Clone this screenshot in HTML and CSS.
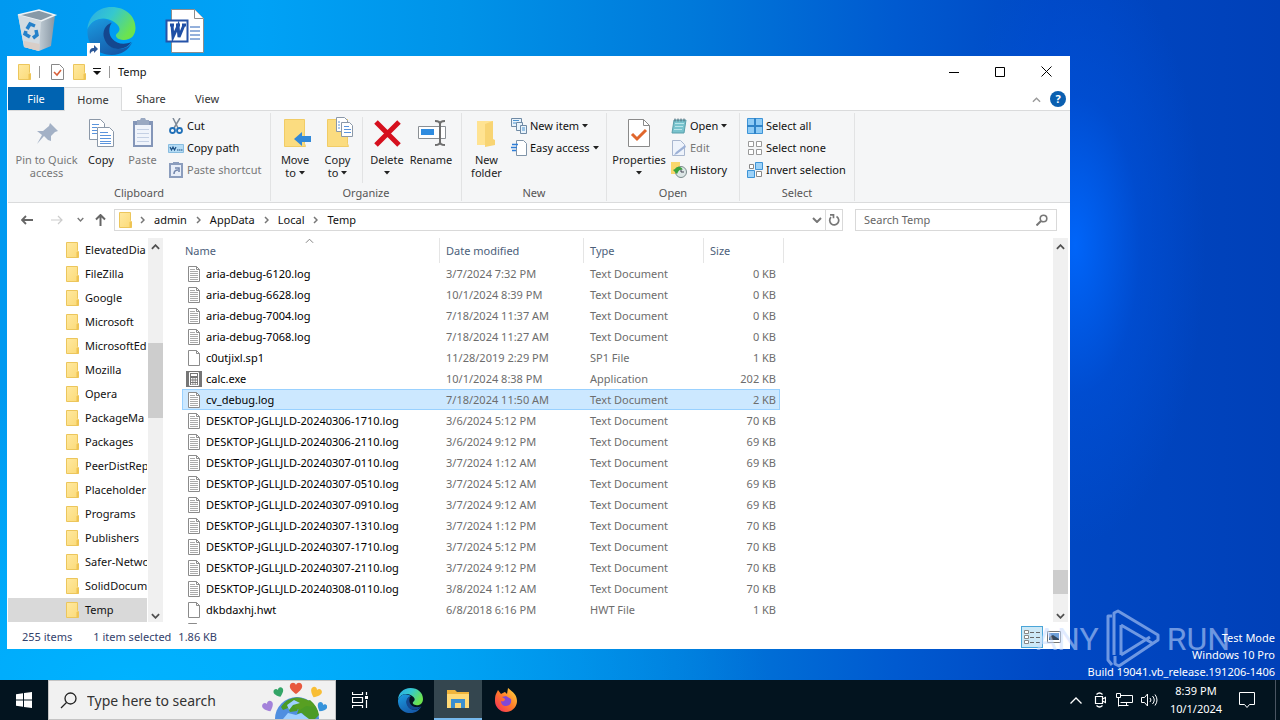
FILE: index.html
```html
<!DOCTYPE html>
<html lang="en">
<head>
<meta charset="utf-8">
<title>Temp</title>
<link rel="stylesheet" href="styles.css">
</head>
<body>
<svg class="defs" aria-hidden="true">
  <defs>
    <linearGradient id="gFold" x1="0" y1="0" x2="1" y2="1"><stop offset="0" stop-color="#ffe9a0"/><stop offset="1" stop-color="#fbda78"/></linearGradient>
    <linearGradient id="gEdgeA" x1="0" y1="0" x2="1" y2=".5"><stop offset="0" stop-color="#29a9e8"/><stop offset=".5" stop-color="#35c8cf"/><stop offset="1" stop-color="#6ce34e"/></linearGradient>
    <linearGradient id="gEdgeB" x1="0" y1="0" x2=".6" y2="1"><stop offset="0" stop-color="#1b9de2"/><stop offset="1" stop-color="#1559a8"/></linearGradient>
    <linearGradient id="gFox" x1="1" y1="0" x2="0" y2="1"><stop offset="0" stop-color="#ffe03f"/><stop offset=".5" stop-color="#ff7a2a"/><stop offset="1" stop-color="#f5245f"/></linearGradient>
    <linearGradient id="gBin" x1="0" y1="0" x2="1" y2="0"><stop offset="0" stop-color="#d5dce2"/><stop offset=".6" stop-color="#bcc8d1"/><stop offset="1" stop-color="#8796a3"/></linearGradient>
  </defs>
  <symbol id="folder" viewBox="0 0 14 16"><path d="M1.500.5h11v8l1 1.500v5.500h-12z" fill="url(#gFold)" stroke="#ecc65c"/><path d="M13.500 9.500l-2 .5v5.500h2z" fill="#efc452"/></symbol>
  <symbol id="txt" viewBox="0 0 14 16"><path d="M1.500.5h8l3 3v12h-11z" fill="#fff" stroke="#8b8b8b"/><path d="M9.500.5v3h3" fill="none" stroke="#8b8b8b"/><path d="M3 3.500h5M3 5.500h8M3 7.500h8M3 9.500h8M3 11.500h8M3 13.500h8" stroke="#aaa"/></symbol>
  <symbol id="blank" viewBox="0 0 14 16"><path d="M1.500.5h8l3 3v12h-11z" fill="#fff" stroke="#8b8b8b"/><path d="M9.500.5v3h3" fill="none" stroke="#8b8b8b"/></symbol>
  <symbol id="calc" viewBox="0 0 16 16"><path d="M0 0h16v16H0z" fill="#767676"/><path d="M3.500 1.500h9v13h-9z" fill="#767676" stroke="#fff"/><path d="M5 3h6v2H5zM5 7h1.500v1.500H5zM7.300 7h1.500v1.500H7.300zM9.600 7h1.500v1.500H9.600zM5 9.500h1.500V11H5zM7.300 9.500h1.500V11H7.300zM9.600 9.500h1.500V11H9.600zM5 12h1.500v1.500H5zM7.300 12h1.500v1.500H7.300zM9.600 12h1.500v1.500H9.600z" fill="#fff"/></symbol>
  <symbol id="edge" viewBox="0 0 48 48"><path d="M24 0C10 0 1 10 0 22c5-11 17-13 25-8 8 5 9 9 4 13-2 2 1 6 7 6 8 0 12-5 12-12C48 9 38 0 24 0z" fill="url(#gEdgeA)"/><path d="M0 23C4 11 18 9 25 16c-7 2-10 9-7 16 3 8 11 12 19 9 4-1 6-4 8-6C41 43 34 48 24 48 11 48-1 39 0 23z" fill="url(#gEdgeB)"/><path d="M24 16c-6 1-10 9-7 16 3 8 11 12 19 9 4-1 6-4 8-6-7 3-15 2-19-3-4-4-4-12-1-16z" fill="#14478f"/></symbol>
  <symbol id="caret" viewBox="0 0 6 4"><path d="M0 0h6L3 3.500z" fill="#222"/></symbol>
  <symbol id="up" viewBox="0 0 10 6"><path d="M1 5l4-4 4 4" fill="none" stroke="currentColor" stroke-width="2"/></symbol>
  <symbol id="down" viewBox="0 0 10 6"><path d="M1 1l4 4 4-4" fill="none" stroke="currentColor" stroke-width="2"/></symbol>
  <symbol id="chev" viewBox="0 0 5 8"><path d="M1 1l3 3-3 3" fill="none" stroke="#777" stroke-width="1.500"/></symbol>
</svg>

<main class="desktop">
  <div class="shortcuts">
    <svg class="sc" viewBox="0 0 48 52" role="img" aria-label="Recycle Bin"><path d="M6 11l21-5 16 5-4 31-12 5-15-4z" fill="url(#gBin)"/><path d="M6 11l21-5 16 5-14 6z" fill="#8799a7" stroke="#eef3f6" stroke-width="1.500"/><path d="M6 11l23 6-2 30-15-4z" fill="#d3dbe1"/><path d="M12 37l16 3-1 7-15-4z" fill="#d8cec8"/><g fill="none" stroke="#2581ca" stroke-width="3.500"><path d="M15 25l3-5 5 2M24 26l1 5-4 3M18 33l-5-3 1-3"/></g></svg>
    <svg class="sc" viewBox="0 0 52 52" role="img" aria-label="Microsoft Edge"><use href="#edge" x="2" y="3" width="49" height="48"/><path d="M2 39h13v13H2z" fill="#fff"/><path d="M5 50c-1-5 1-6 4-6v-3l4 4-4 4v-2c-2 0-3 1-4 3z" fill="#2b5797"/></svg>
    <svg class="sc" viewBox="0 0 48 52" role="img" aria-label="Word document"><path d="M12.500 5.500h23l9 9v34h-32z" fill="#fff" stroke="#8d8d8d"/><path d="M35.500 5.500v9h9" fill="#fff" stroke="#8d8d8d"/><path d="M31 23h10M31 27h10M31 31h10M31 35h10" stroke="#2b62b8"/><path d="M7.500 16.500h21v21h-21z" fill="#fff" stroke="#2553a8" stroke-width="2"/><path d="M11 21h4M17 21h4M23 21h4M13 21l1 12 5-11 1 11 5-12" fill="none" stroke="#1f4fa5" stroke-width="3"/></svg>
  </div>

  <section class="window" aria-label="Temp">
    <header class="titlebar">
      <svg width="14" height="16"><use href="#folder"/></svg>
      <span class="bar"></span>
      <svg class="qprop" width="13" height="16" viewBox="0 0 13 16"><path d="M.5.5h8l4 4v11H.5z" fill="#fff" stroke="#888"/><path d="M3 8l3 3 4-5" fill="none" stroke="#d8603a" stroke-width="1.600"/></svg>
      <svg class="qfold" width="14" height="16"><use href="#folder"/></svg>
      <svg class="qcaret" width="8" height="7" viewBox="0 0 8 7"><path d="M0 .5h8" stroke="#111"/><path d="M0 3h8L4 7z" fill="#111"/></svg>
      <span class="bar"></span>
      <h1>Temp</h1>
      <div class="winbtns">
        <button aria-label="Minimize"><svg width="10" height="10" viewBox="0 0 10 10"><path d="M0 5.500h10" stroke="#000"/></svg></button>
        <button aria-label="Maximize"><svg width="10" height="10" viewBox="0 0 10 10"><path d="M.5.5h9v9h-9z" fill="none" stroke="#000"/></svg></button>
        <button aria-label="Close"><svg width="11" height="11" viewBox="0 0 11 11"><path d="M.5.5l10 10M10.500.5l-10 10" stroke="#000"/></svg></button>
      </div>
    </header>

    <nav class="tabs">
      <button class="tab file">File</button>
      <button class="tab on">Home</button>
      <button class="tab share">Share</button>
      <button class="tab view">View</button>
      <button class="fold-ribbon" aria-label="Collapse ribbon"><svg width="9" height="6" viewBox="0 0 10 6"><path d="M1 5l4-4 4 4" fill="none" stroke="#999" stroke-width="1.500"/></svg></button>
      <button class="help" aria-label="Help">?</button>
    </nav>

    <div class="ribbon">
      <section class="group clip">
        <div class="tools">
          <button class="big pin off"><svg width="32" height="32" viewBox="0 0 32 32"><path d="M19 6l8 8-3 1-4 4v5l-3-1-4-4-7 8 5-9-5-4h6l6-5z" fill="#a3b1c6"/></svg>Pin to Quick<br>access</button>
          <button class="big copy"><svg width="32" height="32" viewBox="0 0 32 32"><g fill="#fff" stroke="#8b98a8"><path d="M4.500 2.500h11l4 4v16h-15z"/><path d="M12.500 10.500h12l4 4v15h-16z"/></g><path d="M7 7.500h7M7 10.500h5M7 13.500h5M7 16.500h5M15 15.500h8M15 18.500h11M15 21.500h11M15 24.500h11M15 26.500h11" stroke="#5b94dc"/></svg>Copy</button>
          <button class="big paste off"><svg width="32" height="32" viewBox="0 0 32 32"><path d="M6 4h20v26H6z" fill="#8496b8"/><path d="M8 8h16v20H8z" fill="#f0f4fb"/><path d="M10 3h3l1-2h4l1 2h3v5H10z" fill="#9aa9c2"/><path d="M10 12.500h12M10 16.500h12M10 20.500h12M10 24.500h12" stroke="#c4d0e4"/></svg>Paste</button>
          <div class="list">
            <button><svg viewBox="0 0 16 16"><path d="M5 0l5 10M12 0L6 10" stroke="#7e8b98" stroke-width="1.500"/><g fill="none" stroke="#2070b8" stroke-width="1.800"><circle cx="4.500" cy="12.500" r="2.500"/><circle cx="11.500" cy="12.500" r="2.500"/></g></svg>Cut</button>
            <button><svg viewBox="0 0 16 16"><path d="M.5 4.500h15v8H.5z" fill="#b5dcf5" stroke="#88bde0"/><path d="M2 7l1.500 3L5 7l1.500 3L8 7M9 10h1.500M11 10h1.500M13 10h1.500" fill="none" stroke="#1c4f83" stroke-width="1.200"/></svg>Copy path</button>
            <button class="off"><svg viewBox="0 0 16 16"><path d="M2 2h12v13H2z" fill="#e8eef8" stroke="#8b9dbd" stroke-width="2"/><path d="M5 0h6v3H5z" fill="#8b9dbd"/><path d="M6 12c0-3 1-4 4-4M7 6h4v4" fill="none" stroke="#7488ad" stroke-width="1.600"/></svg>Paste shortcut</button>
          </div>
        </div>
        <h2>Clipboard</h2>
      </section>

      <section class="group org">
        <div class="tools">
          <button class="big move"><svg width="32" height="32" viewBox="0 0 32 32"><path d="M5.500 2.500h20v24l1 3h-21z" fill="#fbdc80" stroke="#f1cc66"/><path d="M15 22l8-7v4h9v6h-9v4z" fill="#3289d8"/></svg>Move<br>to <svg class="caret"><use href="#caret"/></svg></button>
          <button class="big copyto"><svg width="32" height="32" viewBox="0 0 32 32"><path d="M5.500 2.500h20v24l1 3h-21z" fill="#fbdc80" stroke="#f1cc66"/><g fill="#fff" stroke="#8b98a8"><path d="M14.500.5h8l3 3v11h-11z"/><path d="M19.500 5.500h8l3 3v11h-11z"/></g><path d="M16 5h2M16 8h2M16 11h2M22 9.500h5M22 12.500h7M22 15.500h7" stroke="#5b94dc"/></svg>Copy<br>to <svg class="caret"><use href="#caret"/></svg></button>
          <span class="div"></span>
          <button class="big del"><svg width="32" height="32" viewBox="0 0 32 32"><path d="M5 5l23 23M28 5L5 28" stroke="#d6101e" stroke-width="5"/></svg>Delete<br><svg class="caret"><use href="#caret"/></svg></button>
          <button class="big ren"><svg width="32" height="32" viewBox="0 0 32 32"><path d="M3.500 9.500h27v12h-27z" fill="#fff" stroke="#8a8f94"/><path d="M6 12h13v6H6z" fill="#2f8ce0"/><path d="M20 4q5 0 5 3 0-3 5-3M25 6v20M20 28q5 0 5-3 0 3 5 3" fill="none" stroke="#6e6e6e" stroke-width="2"/></svg>Rename</button>
        </div>
        <h2>Organize</h2>
      </section>

      <section class="group new">
        <div class="tools">
          <button class="big nf"><svg width="32" height="32" viewBox="0 0 32 32"><path d="M6 4h16v24H6z" fill="#ffe392"/><path d="M14 7l8-3v18l2 1v5l-10 2z" fill="#f8d473"/></svg>New<br>folder</button>
          <div class="list">
            <button><svg viewBox="0 0 16 16"><g fill="#e9f3fb" stroke="#6f8aa5"><path d="M.5.500h10v8H.5z"/><path d="M5.500 4.500h6v8h-6z"/><path d="M9.500 7.500h6v8h-6z"/></g><path d="M2 2.500h6M2 5h3M11 10h3M11 12h3" stroke="#4a93cf"/></svg>New item <svg class="caret"><use href="#caret"/></svg></button>
            <button><svg viewBox="0 0 16 16"><path d="M5.500.5h7l3 3v12h-10z" fill="#fff" stroke="#8094a8"/><path d="M1 4.500h6M0 7.500h6M1 10.500h4" stroke="#2f7ed8" stroke-width="1.400"/></svg>Easy access <svg class="caret"><use href="#caret"/></svg></button>
          </div>
        </div>
        <h2>New</h2>
      </section>

      <section class="group open">
        <div class="tools">
          <button class="big props"><svg width="32" height="32" viewBox="0 0 32 32"><path d="M5.500 2.500h15l6 6v21h-21z" fill="#fff" stroke="#8a8a8a"/><path d="M20.500 2.500v6h6" fill="none" stroke="#8a8a8a"/><path d="M9 17l5 5 9-9" fill="none" stroke="#e0662c" stroke-width="3"/></svg>Properties<br><svg class="caret"><use href="#caret"/></svg></button>
          <div class="list">
            <button><svg viewBox="0 0 16 16"><path d="M3 2h12l-2 13H1z" fill="#79c3cd" stroke="#5b9fab"/><path d="M4 5.500h9M4 8.500h8M3 11.500h8" stroke="#b9e5ea"/><path d="M4 .5v3M7 .5v3M10 .5v3M13 .5v3" stroke="#506b78"/></svg>Open <svg class="caret"><use href="#caret"/></svg></button>
            <button class="off"><svg viewBox="0 0 16 16"><path d="M1.500.5h8l4 4v11h-12z" fill="#eef3fb" stroke="#a9b7cf"/><path d="M5 12L14 5l1 2-9 7-3 1z" fill="#9db1d6"/></svg>Edit</button>
            <button><svg viewBox="0 0 16 16"><path d="M0 0h9v12H0z" fill="#f8d76d"/><circle cx="10" cy="10" r="5.500" fill="#dce6e6" stroke="#7b8c8c"/><path d="M10 7v3h3" fill="none" stroke="#445"/><path d="M2 8l4 4 1-2c1-2 3-3 5-2-2-4-6-4-8-1z" fill="#39a23d"/></svg>History</button>
          </div>
        </div>
        <h2>Open</h2>
      </section>

      <section class="group sel">
        <div class="tools">
          <div class="list">
            <button><svg viewBox="0 0 16 16"><path d="M.5.5h15v15H.5z" fill="#8ecbf6" stroke="#3d93d6"/><path d="M8 0v16M0 8h16" stroke="#2f83c8" stroke-width="2"/></svg>Select all</button>
            <button><svg viewBox="0 0 16 16"><path d="M1.500 1.500h5v5h-5zM9.500 1.500h5v5h-5zM1.500 9.500h5v5h-5zM9.500 9.500h5v5h-5z" fill="#fff" stroke="#999"/></svg>Select none</button>
            <button><svg viewBox="0 0 16 16"><path d="M2.500 2.500h4v4h-4zM9.500 9.500h5v5h-5z" fill="#fff" stroke="#888"/><path d="M8.500.5h7v7h-7zM.5 8.500h7v7h-7z" fill="#9dd2f8" stroke="#3d93d6"/></svg>Invert selection</button>
          </div>
        </div>
        <h2>Select</h2>
      </section>
    </div>

    <div class="nav">
      <button aria-label="Back"><svg width="12" height="10" viewBox="0 0 12 10"><path d="M12 5H1M5 1L1 5l4 4" fill="none" stroke="#666" stroke-width="1.800"/></svg></button>
      <button class="fwd" aria-label="Forward"><svg width="12" height="10" viewBox="0 0 12 10"><path d="M0 5h11M7 1l4 4-4 4" fill="none" stroke="#ccc" stroke-width="1.200"/></svg></button>
      <button class="rec" aria-label="Recent locations"><svg width="7" height="5"><use href="#down"/></svg></button>
      <button class="upb" aria-label="Up"><svg width="11" height="12" viewBox="0 0 11 12"><path d="M5.500 12V1M1 5.500L5.500 1 10 5.500" fill="none" stroke="#666" stroke-width="2"/></svg></button>
      <div class="address">
        <svg width="14" height="16"><use href="#folder"/></svg>
        <svg class="sep first"><use href="#chev"/></svg><a href="#">admin</a>
        <svg class="sep"><use href="#chev"/></svg><a href="#">AppData</a>
        <svg class="sep"><use href="#chev"/></svg><a href="#">Local</a>
        <svg class="sep"><use href="#chev"/></svg><a href="#">Temp</a>
        <button class="drop" aria-label="Previous locations"><svg width="10" height="6"><use href="#down"/></svg></button>
        <button class="refresh" aria-label="Refresh"><svg width="12" height="12" viewBox="0 0 12 12"><path d="M8.500 2.500A4.500 4.500 0 1 1 3 3.200M2 .8h3.500v3.500" fill="none" stroke="#777" stroke-width="1.700"/></svg></button>
      </div>
      <label class="search"><input type="text" placeholder="Search Temp" aria-label="Search Temp"><svg width="12" height="12" viewBox="0 0 12 12"><circle cx="7.500" cy="4.500" r="3.300" fill="none" stroke="#777" stroke-width="1.600"/><path d="M5 7L.5 11.500" stroke="#777" stroke-width="2"/></svg></label>
    </div>

    <div class="body">
      <ul class="tree">
        <li><svg><use href="#folder"/></svg>ElevatedDia</li>
        <li><svg><use href="#folder"/></svg>FileZilla</li>
        <li><svg><use href="#folder"/></svg>Google</li>
        <li><svg><use href="#folder"/></svg>Microsoft</li>
        <li><svg><use href="#folder"/></svg>MicrosoftEd</li>
        <li><svg><use href="#folder"/></svg>Mozilla</li>
        <li><svg><use href="#folder"/></svg>Opera</li>
        <li><svg><use href="#folder"/></svg>PackageMa</li>
        <li><svg><use href="#folder"/></svg>Packages</li>
        <li><svg><use href="#folder"/></svg>PeerDistRep</li>
        <li><svg><use href="#folder"/></svg>Placeholder</li>
        <li><svg><use href="#folder"/></svg>Programs</li>
        <li><svg><use href="#folder"/></svg>Publishers</li>
        <li><svg><use href="#folder"/></svg>Safer-Netwo</li>
        <li><svg><use href="#folder"/></svg>SolidDocum</li>
        <li class="cur"><svg><use href="#folder"/></svg>Temp</li>
      </ul>
      <div class="scroll left"><svg><use href="#up"/></svg><span class="thumb"></span><svg><use href="#down"/></svg></div>
      <div class="files">
        <table>
          <colgroup><col class="c1"><col class="c2"><col class="c3"><col class="c4"><col class="c5"></colgroup>
          <thead><tr><th>Name<svg class="sort" viewBox="0 0 10 6"><path d="M1 5l4-4 4 4" fill="none" stroke="#777"/></svg></th><th>Date modified</th><th>Type</th><th colspan="2">Size</th></tr></thead>
          <tbody>
            <tr><td><svg><use href="#txt"/></svg>aria-debug-6120.log</td><td>3/7/2024 7:32 PM</td><td>Text Document</td><td>0 KB</td></tr>
            <tr><td><svg><use href="#txt"/></svg>aria-debug-6628.log</td><td>10/1/2024 8:39 PM</td><td>Text Document</td><td>0 KB</td></tr>
            <tr><td><svg><use href="#txt"/></svg>aria-debug-7004.log</td><td>7/18/2024 11:37 AM</td><td>Text Document</td><td>0 KB</td></tr>
            <tr><td><svg><use href="#txt"/></svg>aria-debug-7068.log</td><td>7/18/2024 11:27 AM</td><td>Text Document</td><td>0 KB</td></tr>
            <tr><td><svg><use href="#blank"/></svg>c0utjixl.sp1</td><td>11/28/2019 2:29 PM</td><td>SP1 File</td><td>1 KB</td></tr>
            <tr><td><svg><use href="#calc"/></svg>calc.exe</td><td>10/1/2024 8:38 PM</td><td>Application</td><td>202 KB</td></tr>
            <tr class="picked"><td><svg><use href="#txt"/></svg>cv_debug.log</td><td>7/18/2024 11:50 AM</td><td>Text Document</td><td>2 KB</td></tr>
            <tr><td><svg><use href="#txt"/></svg>DESKTOP-JGLLJLD-20240306-1710.log</td><td>3/6/2024 5:12 PM</td><td>Text Document</td><td>70 KB</td></tr>
            <tr><td><svg><use href="#txt"/></svg>DESKTOP-JGLLJLD-20240306-2110.log</td><td>3/6/2024 9:12 PM</td><td>Text Document</td><td>69 KB</td></tr>
            <tr><td><svg><use href="#txt"/></svg>DESKTOP-JGLLJLD-20240307-0110.log</td><td>3/7/2024 1:12 AM</td><td>Text Document</td><td>69 KB</td></tr>
            <tr><td><svg><use href="#txt"/></svg>DESKTOP-JGLLJLD-20240307-0510.log</td><td>3/7/2024 5:12 AM</td><td>Text Document</td><td>69 KB</td></tr>
            <tr><td><svg><use href="#txt"/></svg>DESKTOP-JGLLJLD-20240307-0910.log</td><td>3/7/2024 9:12 AM</td><td>Text Document</td><td>69 KB</td></tr>
            <tr><td><svg><use href="#txt"/></svg>DESKTOP-JGLLJLD-20240307-1310.log</td><td>3/7/2024 1:12 PM</td><td>Text Document</td><td>70 KB</td></tr>
            <tr><td><svg><use href="#txt"/></svg>DESKTOP-JGLLJLD-20240307-1710.log</td><td>3/7/2024 5:12 PM</td><td>Text Document</td><td>70 KB</td></tr>
            <tr><td><svg><use href="#txt"/></svg>DESKTOP-JGLLJLD-20240307-2110.log</td><td>3/7/2024 9:12 PM</td><td>Text Document</td><td>70 KB</td></tr>
            <tr><td><svg><use href="#txt"/></svg>DESKTOP-JGLLJLD-20240308-0110.log</td><td>3/8/2024 1:12 AM</td><td>Text Document</td><td>70 KB</td></tr>
            <tr><td><svg><use href="#blank"/></svg>dkbdaxhj.hwt</td><td>6/8/2018 6:16 PM</td><td>HWT File</td><td>1 KB</td></tr>
            <tr><td><svg><use href="#txt"/></svg></td><td></td><td></td><td></td></tr>
          </tbody>
        </table>
      </div>
      <div class="scroll right"><svg><use href="#up"/></svg><span class="thumb"></span><svg><use href="#down"/></svg></div>
    </div>

    <footer class="status">
      <span class="count">255 items</span><span>1 item selected</span><span class="size">1.86 KB</span>
      <div class="modes">
        <button class="on" aria-label="Details view"><svg width="16" height="14" viewBox="0 0 16 14"><path d="M.5.500h4v3h-4zM.5 5.500h4v3h-4zM.5 10.500h4v3h-4z" fill="#fff" stroke="#888"/><path d="M6 2.500h4M12 2.500h4M6 7.500h4M12 7.500h4M6 12.500h4M12 12.500h4" stroke="#666"/></svg></button>
        <button aria-label="Large icons view"><svg width="14" height="12" viewBox="0 0 14 12"><path d="M.5.500h13v11H.5z" fill="#fff" stroke="#777"/><path d="M2 2h10v6H2z" fill="#6e9fd8"/><path d="M2 6l4-2 6 4v1H2z" fill="#33475d"/></svg></button>
      </div>
    </footer>
  </section>

  <div class="watermark" aria-label="ANY RUN">
    <span>ANY</span>
    <svg width="56" height="60" viewBox="0 0 56 60"><path d="M9 46V4l4-2 40 24v5L14 57l-4-2v-8M7 7H3v44l4 5M16 16l31 18M16 46l29-18M16 16v30" fill="none" stroke="#c9dcff" stroke-width="3" stroke-linejoin="round"/></svg>
    <span>RUN</span>
  </div>
  <p class="build">Test Mode<br>Windows 10 Pro<br>Build 19041.vb_release.191206-1406</p>
</main>

<footer class="taskbar">
  <button class="start" aria-label="Start"><svg width="16" height="16" viewBox="0 0 16 16"><path d="M0 2.300L7 1.300v6.200H0zM8 1.100L16 0v7.500H8zM0 8.500h7v6.200l-7-1zM8 8.500h8V16l-8-1.100z" fill="#fff"/></svg></button>
  <label class="tsearch">
    <svg width="17" height="17" viewBox="0 0 17 17"><circle cx="10.500" cy="6.500" r="5.500" fill="none" stroke="#222" stroke-width="1.300"/><path d="M6.500 10.500L1 16" stroke="#222" stroke-width="1.300"/></svg>
    <input type="text" placeholder="Type here to search" aria-label="Type here to search">
    <svg class="globe" width="66" height="37" viewBox="0 0 66 37"><defs><path id="heart" d="M0 9C-4 6-7 3-6 0-5-3-1-3 0 0 1-3 5-3 6 0 7 3 4 6 0 9z"/></defs><circle cx="36" cy="37" r="22" fill="#4f8fe0"/><path d="M20 25c5-8 12-10 20-9l4 5-6 3-2 5-7 1-2-4-5 2zM43 20l6-2c5 4 8 9 9 15l-4 4h-8l-5-6-5 1 2-6z" fill="#4b9b26"/><path d="M34 16c9-1 16 3 20 9l-9-1-6 4-6-3 4-4z" fill="#579f22"/><path d="M22 37l5-6 8 2 5-2 8 6z" fill="#9fd0ff"/><path d="M26 23l7-5 6 3-7 2-4 5z" fill="#9fd0ff"/><use href="#heart" x="35" y="3" fill="#e8593f"/><use href="#heart" transform="translate(17 8) rotate(-20) scale(.8)" fill="#34a567"/><use href="#heart" transform="translate(56 8) rotate(25) scale(.9)" fill="#f8be35"/><use href="#heart" transform="translate(6 22) rotate(-25) scale(.9)" fill="#a482da"/><use href="#heart" transform="translate(62 23) rotate(30) scale(.8)" fill="#3694db"/></svg>
  </label>
  <button class="app" aria-label="Task View"><svg width="17" height="16" viewBox="0 0 17 16"><path d="M.5 0v2.500h10V0M.5 5.500h10v5H.5zM.5 16v-2.500h10V16M14.500 0v3M14.500 8v8" fill="none" stroke="#fff" stroke-width="1.200"/><path d="M13 4h3v3h-3z" fill="#fff"/></svg></button>
  <button class="app" aria-label="Microsoft Edge"><svg width="25" height="25"><use href="#edge"/></svg></button>
  <button class="app on" aria-label="File Explorer"><svg width="24" height="20" viewBox="0 0 24 20"><path d="M1 1h8l2 2h12v16H1z" fill="#f0b43c"/><path d="M1 5h22v14H1z" fill="#ffd977"/><path d="M5 10h14v9h-4v-5H9v5H5z" fill="#3b8fd0"/></svg></button>
  <button class="app" aria-label="Firefox"><svg width="24" height="24" viewBox="0 0 24 24"><path d="M2 6l2-4 3 4c2-1 3-2 4-2l2 2 1-6c5 4 9 7 9 13 0 6-5 11-11 11S1 19 1 13c0-3 0-5 1-7z" fill="url(#gFox)"/><path d="M8 9l4-1 5 3c1 5-2 7-5 7s-5-2-5-5c2 1 4 0 4-2z" fill="#8148d6"/></svg></button>
  <div class="tray">
    <button aria-label="Show hidden icons"><svg width="12" height="7" viewBox="0 0 12 7"><path d="M.5 6.500l5.500-5.500 5.500 5.500" fill="none" stroke="#fff" stroke-width="1.300"/></svg></button>
    <button aria-label="Meet Now"><svg width="12" height="16" viewBox="0 0 12 16"><path d="M1.500 4.500h7v7h-7zM8.500 7l3-1.500v5L8.500 9M2.500 2.500q3-3 6 0M2.500 13.500q3 3 6 0" fill="none" stroke="#fff" stroke-width="1.200"/></svg></button>
    <button aria-label="Network"><svg width="17" height="14" viewBox="0 0 17 14"><path d="M4.500 2.500h12v7h-12M.5.500h4v4h-4zM2.500 4.500v9M2.500 12.500h10M10.500 9.500v3" fill="none" stroke="#fff"/></svg></button>
    <button aria-label="Volume"><svg width="17" height="14" viewBox="0 0 17 14"><path d="M.5 4.500h3l3-3.500v12l-3-3.500h-3zM9 5q2 2 0 4M11.500 3q3.500 4 0 8M14 1.500q4 5.500 0 11" fill="none" stroke="#fff"/></svg></button>
    <div class="clock">8:39 PM<br>10/1/2024</div>
    <button class="note" aria-label="Notifications"><svg width="16" height="16" viewBox="0 0 16 16"><path d="M.5.5h15v12h-5L8 15.500 5.500 12.500h-5z" fill="none" stroke="#fff"/></svg></button>
  </div>
</footer>
</body>
</html>
```
FILE: styles.css
```css
* { box-sizing: border-box; }
body {
  margin: 0;
  height: 100vh;
  display: flex;
  flex-direction: column;
  overflow: hidden;
  font: 11px/14px "Noto Sans", sans-serif;
  color: #111;
}
button {
  border: 0;
  padding: 0;
  background: none;
  font: inherit;
  color: inherit;
}
input {
  border: 0;
  outline: 0;
  min-width: 0;
  background: none;
  font: inherit;
}
h1, h2 { margin: 0; font: inherit; }
svg { flex: none; }
.defs { position: absolute; width: 0; height: 0; }

/* Desktop */
.desktop {
  flex: 1;
  position: relative;
  background:
    radial-gradient(ellipse 130px 300px at 84% 36%, rgba(0, 104, 255, .9) 0%, rgba(0, 84, 225, .45) 50%, rgba(0, 70, 200, 0) 100%),
    radial-gradient(ellipse 640px 300px at 10% 100%, #00b2ff 0%, rgba(0, 178, 255, 0) 100%),
    linear-gradient(90deg, #0099f0 0%, #00a2f6 20%, #0093e8 36%, #0079da 54%, #005ad0 70%, #0048c4 82%, #0040b8 100%);
}
.shortcuts { display: flex; gap: 25px; padding: 4px 0 0 12px; }
.sc { width: 48px; height: 52px; }
.sc:nth-child(2) { width: 52px; }
.sc:nth-child(3) { margin-left: -3px; }

/* Explorer window */
.window {
  position: absolute;
  top: 56px;
  left: 7px;
  right: 210px;
  bottom: 31px;
  display: flex;
  flex-direction: column;
  padding-left: 1px;
  background: #fff;
}
.titlebar { display: flex; align-items: center; height: 31px; padding-left: 9px; }
.bar { width: 1px; height: 12px; background: #999; margin-left: 8px; }
.qprop { margin-left: 11px; }
.qfold { margin-left: 8px; }
.qcaret { margin-left: 7px; }
h1 { margin-left: 8px; }
.winbtns { margin-left: auto; margin-right: 1px; display: flex; }
.winbtns button { width: 46px; height: 30px; display: grid; place-items: center; }

.tabs { display: flex; height: 24px; border-bottom: 1px solid #dadbdc; }
.tab { height: 24px; width: 56px; color: #333; }
.tab.file { background: #0063b1; color: #fff; height: 23px; }
.tab.on { width: 58px; background: #f5f6f7; border: 1px solid #dadbdc; border-bottom: 0; }
.tab.share { width: 58px; }
.tab.view { width: 54px; }
.fold-ribbon { margin-left: auto; margin-right: 9px; }
.help {
  align-self: center;
  width: 16px;
  height: 16px;
  margin-right: 4px;
  border-radius: 50%;
  background: #0a5fb0;
  color: #fff;
  font-weight: bold;
}

/* Ribbon */
.ribbon { display: flex; height: 92px; background: #f5f6f7; border-bottom: 1px solid #dadbdc; }
.group {
  display: flex;
  flex-direction: column;
  justify-content: space-between;
  margin: 2px 0 1px;
  border-right: 1px solid #e2e3e4;
}
.clip { width: 263px; }
.org { width: 191px; }
.new { width: 145px; }
.open { width: 133px; }
.sel { width: 115px; }
.group h2 { text-align: center; color: #555; padding-bottom: 1px; }
.tools { display: flex; align-items: flex-start; }
.big {
  padding-top: 4px;
  line-height: 13px;
  white-space: nowrap;
  color: #222;
}
.big > svg:first-child { display: block; margin: 0 auto 4px; }
.big.off, .off { color: #777; }
.pin { width: 77px; }
.copy { width: 32px; }
.paste { width: 51px; }
.caret { width: 6px; height: 4px; vertical-align: 2px; }
.move { width: 48px; }
.copyto { width: 37px; }
.div { width: 1px; margin: 4px 6px 0; height: 66px; background: #e2e3e4; }
.del { width: 36px; }
.ren { width: 52px; }
.nf { width: 49px; }
.props { width: 64px; }
.list { display: flex; flex-direction: column; padding-top: 2px; }
.list button {
  display: flex;
  align-items: center;
  gap: 3px;
  height: 22px;
  white-space: nowrap;
}
.list svg:first-child { width: 16px; height: 16px; }
.sel .list { padding-left: 7px; }

/* Address row */
.nav { display: flex; align-items: center; height: 35px; padding: 0 13px 2px; }
.nav button { display: grid; place-items: center; }
.fwd { margin-left: 18px; }
.rec { margin-left: 14px; color: #777; }
.upb { margin-left: 11px; }
.address {
  flex: 1;
  display: flex;
  align-items: center;
  height: 22px;
  margin: 0 12px 0 8px;
  padding-left: 3px;
  border: 1px solid #d9d9d9;
}
.address a { color: #111; text-decoration: none; }
.sep { width: 5px; height: 8px; margin: 0 9px; }
.sep.first { margin-left: 8px; }
.drop { margin-left: auto; width: 16px; color: #777; }
.refresh { width: 17px; height: 20px; border-left: 1px solid #d9d9d9; }
.search {
  display: flex;
  align-items: center;
  width: 202px;
  height: 22px;
  padding: 0 8px;
  border: 1px solid #d9d9d9;
}
.search input { flex: 1; padding: 0; }
.search input::placeholder { color: #666; opacity: 1; }

/* Body */
.body { flex: 1; min-height: 0; display: flex; overflow: hidden; }
.tree { width: 139px; margin: 0; padding: 0; list-style: none; overflow: hidden; }
.tree li {
  display: flex;
  align-items: center;
  gap: 6px;
  height: 24px;
  padding-left: 57px;
  white-space: nowrap;
}
.tree svg { width: 14px; height: 16px; }
.tree .cur { background: #d9d9d9; }
.scroll {
  display: flex;
  flex-direction: column;
  align-items: center;
  width: 15px;
  margin-bottom: 2px;
  padding: 6px 0 3px;
  background: #f0f0f0;
  color: #505050;
}
.scroll svg { width: 9px; height: 6px; }
.thumb { width: 15px; background: #cdcdcd; }
.left { margin-left: 1px; }
.left .thumb { height: 75px; margin: 93px 0 auto; }
.right .thumb { height: 24px; margin: auto 0 19px; }
.right { margin-right: 2px; }
.files { flex: 1; margin-left: 19px; overflow: hidden; }
table { width: 602px; table-layout: fixed; border-collapse: separate; border-spacing: 0; }
.c1 { width: 258px; }
.c2 { width: 144px; }
.c3 { width: 120px; }
.c4 { width: 76px; }
.c5 { width: 4px; }
th {
  position: relative;
  height: 25px;
  padding: 0 0 0 6px;
  border-right: 1px solid #e5e5e5;
  text-align: left;
  font-weight: normal;
  color: #4c607a;
}
th:first-child { padding-left: 3px; }
.sort { position: absolute; left: 123px; top: 0; width: 9px; height: 6px; }
td { height: 21px; padding: 0 0 0 6px; white-space: nowrap; color: #6d6d6d; }
td:first-child { display: flex; align-items: center; gap: 4px; padding-left: 4px; color: #000; }
td svg { width: 16px; height: 16px; }
td:nth-child(4) { text-align: right; padding-right: 4px; }
.picked td {
  background: #cce8ff;
  border: 1px solid #99d1ff;
  border-width: 1px 0;
}
.picked td:first-child { border-left-width: 1px; padding-left: 3px; }
.picked td:nth-child(4) { border-right-width: 1px; padding-right: 3px; }

.status { display: flex; align-items: center; height: 25px; padding-left: 14px; color: #33416b; }
.count { margin-right: 21px; }
.size { margin-left: 7px; }
.modes { margin-left: auto; margin-right: 5px; display: flex; }
.modes button { width: 22px; height: 22px; display: grid; place-items: center; }
.modes .on { background: #cce8f6; border: 1px solid #4aa5d8; }

/* Overlays in the desktop corner */
.watermark {
  position: absolute;
  right: 50px;
  bottom: 11px;
  display: flex;
  align-items: center;
  gap: 6px;
  opacity: .55;
  color: #c9dcff;
  font: 400 32px/38px Roboto, sans-serif;
}
.build {
  position: absolute;
  right: 5px;
  bottom: 0;
  margin: 0;
  line-height: 17px;
  text-align: right;
  color: #fff;
}

/* Taskbar */
.taskbar { display: flex; height: 40px; background: #03141f; color: #fff; }
.taskbar button { display: grid; place-items: center; }
.start { width: 48px; }
.tsearch {
  display: flex;
  align-items: center;
  gap: 10px;
  width: 288px;
  height: 40px;
  padding-left: 11px;
  background: #f1f1f1;
  border: 1px solid #c4c4c4;
}
.tsearch input { flex: 1; padding: 0; font-size: 14px; }
.tsearch input::placeholder { color: #333; opacity: 1; }
.globe { align-self: flex-end; margin-right: 8px; }
.app { width: 48px; }
.app:last-of-type { margin-left: 1px; }
.app.on { width: 48px; background: #34464f; border-bottom: 2px solid #76b9ed; }
.app:nth-of-type(3), .app:nth-of-type(4) { margin-left: 2px; }
.app:nth-of-type(4), .app:nth-of-type(5) { margin-left: 0; }
.tray { margin-left: auto; display: flex; align-items: center; gap: 8px; padding-right: 4px; }
.tray button { min-width: 16px; }
.clock { width: 60px; text-align: center; line-height: 18px; }
.tray .note { width: 42px; height: 40px; padding-right: 16px; border-right: 1px solid #4a5562; }
```
